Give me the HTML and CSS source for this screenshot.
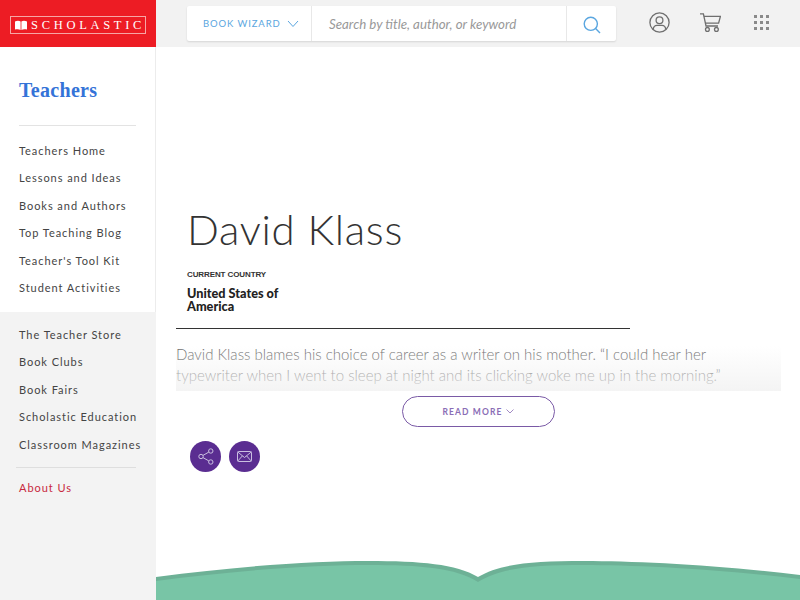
FILE: index.html
```html
<!DOCTYPE html>
<html lang="en">
<head>
    <meta charset="UTF-8">
    <title>David Klass | Scholastic</title>
    <link rel="stylesheet" href="styles.css">
</head>
<body>
    <div class="page">
        <aside class="sidebar">
            <div class="logo-bar">
                <div class="logo">
                    <svg class="logo-book" width="12" height="10" viewBox="0 0 12 10"><path d="M0 1.5 C2 .3 4.3 .4 5.6 1.5 V10 C4 9 2 9 0 9.6 Z M6.4 1.5 C7.7 .4 10 .3 12 1.5 V9.6 C10 9 8 9 6.4 10 Z" fill="#fff"/></svg>
                    <span>SCHOLASTIC</span>
                </div>
            </div>
            <div class="side-top">
                <h2 class="side-title">Teachers</h2>
                <ul class="side-nav">
                    <li>Teachers Home</li>
                    <li>Lessons and Ideas</li>
                    <li>Books and Authors</li>
                    <li>Top Teaching Blog</li>
                    <li>Teacher's Tool Kit</li>
                    <li>Student Activities</li>
                </ul>
            </div>
            <div class="side-bottom">
                <ul class="side-nav">
                    <li>The Teacher Store</li>
                    <li>Book Clubs</li>
                    <li>Book Fairs</li>
                    <li>Scholastic Education</li>
                    <li>Classroom Magazines</li>
                </ul>
                <div class="side-about">About Us</div>
            </div>
        </aside>

        <div class="right">
            <header class="topbar">
                <div class="searchbox">
                    <div class="wizard">
                        <span>BOOK WIZARD</span>
                        <svg width="12" height="8" viewBox="0 0 12 8"><path d="M1 1 L6 6.5 L11 1" fill="none" stroke="#5aa6e0" stroke-width="1"/></svg>
                    </div>
                    <div class="search-text">Search by title, author, or keyword</div>
                    <div class="search-btn">
                        <svg width="18" height="18" viewBox="0 0 18 18"><circle cx="7.8" cy="7.8" r="6.6" fill="none" stroke="#5aa6e0" stroke-width="1.4"/><path d="M12.6 12.6 L17 17" stroke="#5aa6e0" stroke-width="1.4"/></svg>
                    </div>
                </div>
                <div class="top-icons">
                    <svg width="21" height="21" viewBox="0 0 21 21" fill="none" stroke="#6f6f6f" stroke-width="1.3"><circle cx="10.5" cy="10.5" r="9.6"/><circle cx="10.5" cy="8.3" r="3.4"/><path d="M4.2 17.4 C4.6 14.2 6.6 13.4 8 13.4 H13 C14.4 13.4 16.4 14.2 16.8 17.4"/></svg>
                    <svg width="21" height="19" viewBox="0 0 21 19" fill="none" stroke="#6f6f6f" stroke-width="1.3"><path d="M0 .8 H3.4 L6 13 H18"/><path d="M3.9 3.4 H20.4 L18.6 10.2 H5.4"/><circle cx="7.4" cy="16.4" r="1.9"/><circle cx="16.4" cy="16.4" r="1.9"/></svg>
                    <div class="dots">
                        <i></i><i></i><i></i><i></i><i></i><i></i><i></i><i></i><i></i>
                    </div>
                </div>
            </header>

            <main class="content">
                <h1 class="name">David Klass</h1>
                <div class="label">CURRENT COUNTRY</div>
                <div class="country">United States of<br>America</div>
                <hr class="rule">
                <div class="bio">
                    <p>David Klass blames his choice of career as a writer on his mother. “I could hear her typewriter when I went to sleep at night and its clicking woke me up in the morning.”</p>
                    <div class="bio-fade"></div>
                </div>
                <div class="more-row">
                    <div class="read-more">
                        READ MORE
                        <svg width="8" height="5" viewBox="0 0 8 5"><path d="M.5 .5 L4 4 L7.5 .5" fill="none" stroke="#8a6db5" stroke-width=".8"/></svg>
                    </div>
                </div>
                <div class="share">
                    <div class="round-btn">
                        <svg width="16" height="17" viewBox="0 0 16 17" fill="none" stroke="#c9bfe0" stroke-width="1"><circle cx="3" cy="8.5" r="2.2"/><circle cx="12.8" cy="3" r="2.2"/><circle cx="12.8" cy="14" r="2.2"/><path d="M5 7.4 L10.8 4.1 M5 9.6 L10.8 12.9"/></svg>
                    </div>
                    <div class="round-btn">
                        <svg width="15" height="11" viewBox="0 0 15 11" fill="none" stroke="#c9bfe0" stroke-width="1"><rect x=".5" y=".5" width="14" height="10" rx="1"/><path d="M.8 1 L7.5 6.5 L14.2 1 M.8 10 L5.4 4.9 M14.2 10 L9.6 4.9"/></svg>
                    </div>
                </div>
                <svg class="book" width="644" height="40" viewBox="0 0 644 40" preserveAspectRatio="none">
                    <path d="M0 17 C80 6 160 1 212 1 C265 1 300 4 322 17 C344 4 375 1 428 1 C480 1 564 5 644 15 V40 H0 Z" fill="#6db196"/>
                    <path d="M0 21 C80 10 160 5 212 5 C265 5 300 8 322 22 C344 8 375 5 428 5 C480 5 564 9 644 19 V40 H0 Z" fill="#78c5a6"/>
                </svg>
            </main>
        </div>
    </div>
</body>
</html>
```

FILE: styles.css
```css
html, body {
    margin: 0;
    padding: 0;
    height: 600px;
    overflow: hidden;
    background-color: #fff;
}
.page {
    display: flex;
    height: 600px;
    font-family: 'Lato', 'Open Sans', sans-serif;
}
.sidebar {
    width: 156px;
    flex: none;
    display: flex;
    flex-direction: column;
    background-color: #f3f3f3;
    box-sizing: border-box;
}
.logo-bar {
    height: 47px;
    flex: none;
    background-color: #ed1c24;
    display: flex;
    align-items: center;
    justify-content: center;
}
.logo {
    width: 136px;
    height: 18px;
    margin-top: 3px;
    box-sizing: border-box;
    border: 1px solid #f7a5a5;
    display: flex;
    align-items: center;
    padding-left: 4px;
    gap: 4px;
    color: #fff;
    font-family: 'Liberation Serif', serif;
    font-size: 12.5px;
    letter-spacing: 3.7px;
    white-space: nowrap;
}
.logo-book {
    flex: none;
}
.side-top {
    height: 265px;
    flex: none;
    box-sizing: border-box;
    padding: 31px 19px 0 19px;
    background-color: #fff;
    border-right: 1px solid #ececec;
}
.side-title {
    margin: 0;
    padding-bottom: 23px;
    border-bottom: 1px solid #e3e3e3;
    color: #3473d8;
    font-family: 'Liberation Serif', serif;
    font-size: 20px;
    line-height: 24px;
    font-weight: bold;
    letter-spacing: 0.3px;
}
.side-nav {
    list-style: none;
    margin: 0;
    padding: 0;
}
.side-top .side-nav {
    margin-top: 11px;
}
.side-nav li {
    height: 27.4px;
    line-height: 27.4px;
    color: #444;
    font-size: 11px;
    letter-spacing: 0.95px;
    white-space: nowrap;
}
.side-bottom {
    padding: 9px 0 0 19px;
}
.side-about {
    margin: 9px 20px 0 -3px;
    padding: 10px 0 0 3px;
    border-top: 1px solid #dedede;
    color: #c8283e;
    font-size: 11px;
    line-height: 20px;
    letter-spacing: 0.95px;
}
.right {
    flex: 1;
    display: flex;
    flex-direction: column;
    min-width: 0;
}
.topbar {
    height: 47px;
    flex: none;
    background-color: #f2f2f2;
    display: flex;
    align-items: flex-start;
    padding: 6px 0 0 31px;
    box-sizing: border-box;
}
.searchbox {
    width: 429px;
    height: 35px;
    display: flex;
    background-color: #fff;
    border-radius: 2px;
    box-shadow: 0 1px 2px rgba(0,0,0,0.12);
}
.wizard {
    width: 125px;
    flex: none;
    box-sizing: border-box;
    border-right: 1px solid #e8e8e8;
    display: flex;
    align-items: center;
    padding-left: 16px;
    gap: 6px;
    color: #5aa6e0;
    font-size: 9.5px;
    letter-spacing: 0.9px;
}
.search-text {
    flex: 1;
    padding-left: 17px;
    line-height: 36px;
    color: #999;
    font-size: 13.3px;
    font-style: italic;
}
.search-btn {
    width: 50px;
    flex: none;
    border-left: 1px solid #e8e8e8;
    display: flex;
    align-items: center;
    justify-content: center;
    padding-top: 2px;
    box-sizing: border-box;
}
.top-icons {
    display: flex;
    align-items: center;
    height: 33px;
    margin-left: 33px;
    gap: 30px;
}
.dots {
    display: grid;
    grid-template-columns: repeat(3, 3px);
    gap: 3px;
    margin-left: 3px;
}
.dots i {
    width: 3px;
    height: 3px;
    background-color: #8a8a8a;
}
.content {
    flex: 1;
    display: flex;
    flex-direction: column;
    padding-left: 20px;
    min-height: 0;
}
.name {
    margin: 157px 0 0 11px;
    color: #333;
    font-size: 42px;
    line-height: 50px;
    font-weight: 300;
    letter-spacing: 0.7px;
}
.label {
    margin: 15px 0 0 11px;
    color: #333;
    font-family: 'Liberation Sans', sans-serif;
    font-size: 8px;
    font-weight: bold;
    line-height: 11px;
    letter-spacing: -0.1px;
}
.country {
    margin: 7px 0 0 11px;
    color: #222;
    font-size: 12.7px;
    font-weight: 900;
    line-height: 13px;
}
.rule {
    width: 454px;
    margin: 15px 0 0;
    border: 0;
    border-top: 1px solid #333;
}
.bio {
    position: relative;
    width: 605px;
    height: 62px;
    overflow: hidden;
}
.bio p {
    margin: 15px 0 0;
    color: #666;
    font-size: 15px;
    line-height: 21px;
    font-weight: 300;
    width: 590px;
}
.bio-fade {
    position: absolute;
    left: 0;
    right: 0;
    bottom: 0;
    height: 45px;
    background-image: linear-gradient(rgba(242,242,242,0), rgba(242,242,242,0.85));
}
.more-row {
    width: 605px;
    margin-top: 5px;
    padding-left: 226px;
    box-sizing: border-box;
}
.read-more {
    width: 153px;
    height: 31px;
    box-sizing: border-box;
    border: 1px solid #7a5aa6;
    border-radius: 16px;
    display: flex;
    align-items: center;
    justify-content: center;
    gap: 4px;
    color: #8a6db5;
    font-size: 8.5px;
    font-weight: bold;
    letter-spacing: 1.1px;
}
.share {
    display: flex;
    gap: 8px;
    margin: 14px 0 0 14px;
}
.round-btn {
    width: 31px;
    height: 31px;
    border-radius: 50%;
    background-color: #5a2d91;
    display: flex;
    align-items: center;
    justify-content: center;
}
.book {
    display: block;
    margin: auto 0 0 -20px;
    flex: none;
}
```
